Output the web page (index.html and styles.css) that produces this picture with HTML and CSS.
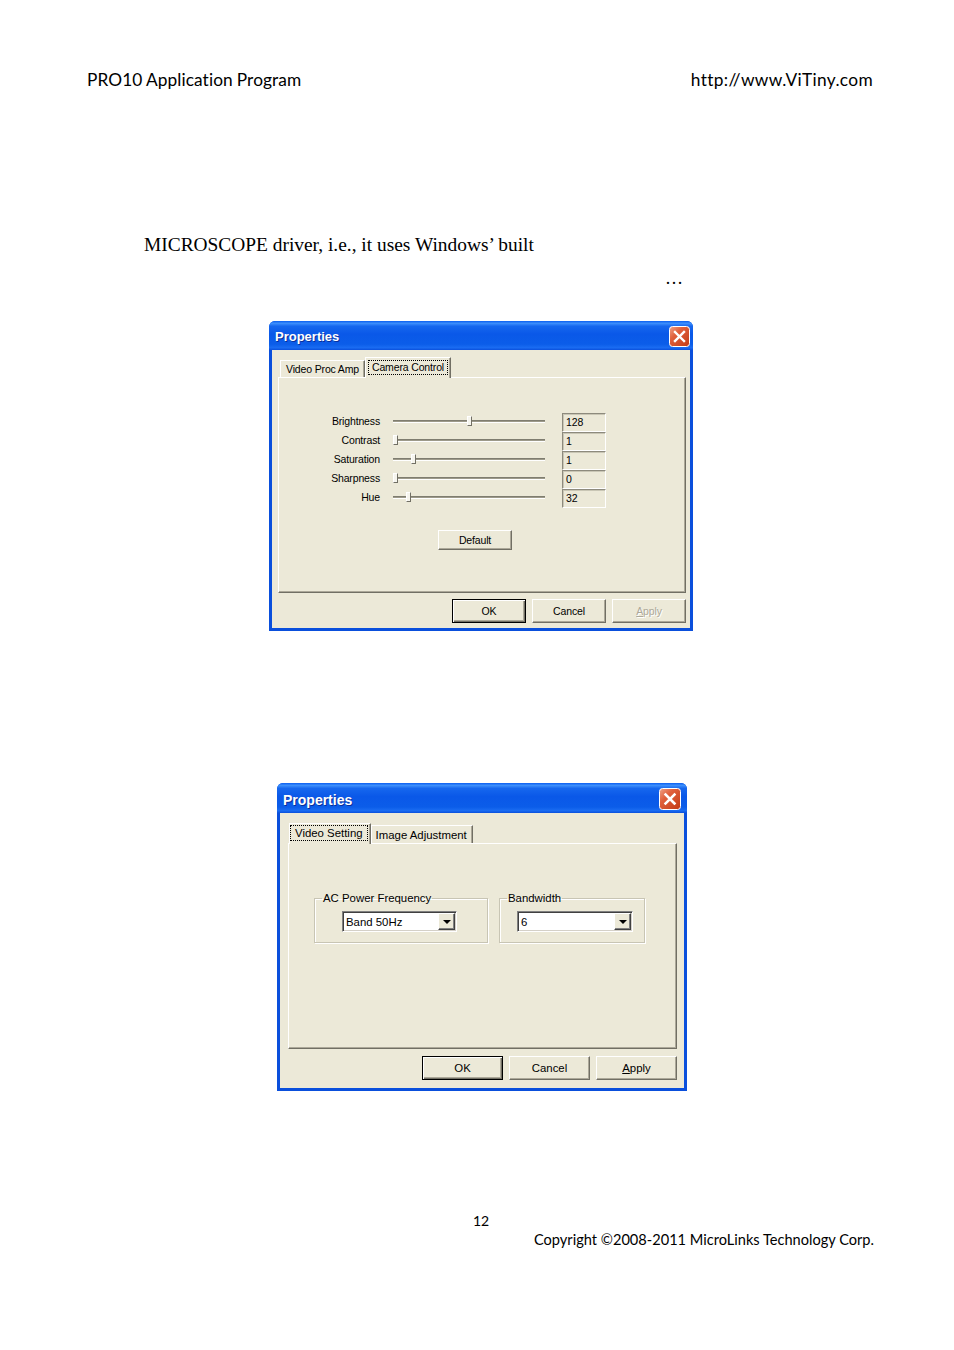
FILE: index.html
```html
<!DOCTYPE html>
<html>
<head>
<meta charset="utf-8">
<link rel="stylesheet" href="styles.css">
</head>
<body>
<div class="page">
  <header class="hdr">
    <span>PRO10 Application Program</span>
    <span>http://www.ViTiny.com</span>
  </header>

  <p class="body-text">MICROSCOPE driver, i.e., it uses Windows’ built</p>
  <p class="ellipsis">…</p>

  <div class="win win1">
    <div class="titlebar">
      <span class="title">Properties</span>
      <span class="close">
        <svg width="21" height="21" viewBox="0 0 21 21">
          <defs>
            <linearGradient id="cg1" x1="0" y1="0" x2="1" y2="1">
              <stop offset="0" stop-color="#f0a48a"/>
              <stop offset="0.35" stop-color="#e0603c"/>
              <stop offset="1" stop-color="#c23a14"/>
            </linearGradient>
          </defs>
          <rect x="0.5" y="0.5" width="20" height="20" rx="3" fill="url(#cg1)" stroke="#fff"/>
          <path d="M6 6 L15 15 M15 6 L6 15" stroke="#fff" stroke-width="2.4" stroke-linecap="square"/>
        </svg>
      </span>
    </div>
    <div class="client">
      <div class="tabs">
        <span class="tab">Video Proc Amp</span>
        <span class="tab sel"><span class="focus">Camera Control</span></span>
      </div>
      <div class="panel">
        <div class="sliders">
          <span class="lbl">Brightness</span>
          <span class="track"><span class="thumb" style="left:74px"></span></span>
          <span class="val">128</span>

          <span class="lbl">Contrast</span>
          <span class="track"><span class="thumb" style="left:0px"></span></span>
          <span class="val">1</span>

          <span class="lbl">Saturation</span>
          <span class="track"><span class="thumb" style="left:18px"></span></span>
          <span class="val">1</span>

          <span class="lbl">Sharpness</span>
          <span class="track"><span class="thumb" style="left:0px"></span></span>
          <span class="val">0</span>

          <span class="lbl">Hue</span>
          <span class="track"><span class="thumb" style="left:13px"></span></span>
          <span class="val">32</span>
        </div>
        <span class="btn btn-default">Default</span>
      </div>
      <div class="btnrow">
        <span class="btn btn-main ok">OK</span>
        <span class="btn btn-main">Cancel</span>
        <span class="btn btn-main disabled"><u>A</u>pply</span>
      </div>
    </div>
  </div>

  <div class="win win2">
    <div class="titlebar">
      <span class="title">Properties</span>
      <span class="close">
        <svg width="22" height="22" viewBox="0 0 22 22">
          <defs>
            <linearGradient id="cg2" x1="0" y1="0" x2="1" y2="1">
              <stop offset="0" stop-color="#f0a48a"/>
              <stop offset="0.35" stop-color="#e0603c"/>
              <stop offset="1" stop-color="#c23a14"/>
            </linearGradient>
          </defs>
          <rect x="0.5" y="0.5" width="21" height="21" rx="3" fill="url(#cg2)" stroke="#fff"/>
          <path d="M6.5 6.5 L15.5 15.5 M15.5 6.5 L6.5 15.5" stroke="#fff" stroke-width="2.5" stroke-linecap="square"/>
        </svg>
      </span>
    </div>
    <div class="client">
      <div class="tabs">
        <span class="tab sel"><span class="focus">Video Setting</span></span>
        <span class="tab">Image Adjustment</span>
      </div>
      <div class="panel">
        <div class="groups">
          <fieldset class="group g-ac">
            <legend>AC Power Frequency</legend>
            <div class="combo"><span class="ctext">Band 50Hz</span><span class="cbtn"></span></div>
          </fieldset>
          <fieldset class="group g-bw">
            <legend>Bandwidth</legend>
            <div class="combo"><span class="ctext">6</span><span class="cbtn"></span></div>
          </fieldset>
        </div>
      </div>
      <div class="btnrow">
        <span class="btn btn-main ok">OK</span>
        <span class="btn btn-main">Cancel</span>
        <span class="btn btn-main"><u>A</u>pply</span>
      </div>
    </div>
  </div>

  <p class="pageno">12</p>
  <p class="copy">Copyright ©2008-2011 MicroLinks Technology Corp.</p>
</div>
</body>
</html>
```

FILE: styles.css
```css
* { box-sizing: border-box; }
html, body { margin: 0; padding: 0; background: #fff; }
.page {
  width: 954px;
  height: 1350px;
  background: #fff;
  overflow: hidden;
}
p { margin: 0; }

.hdr {
  display: flex;
  justify-content: space-between;
  padding: 69px 81px 0 87px;
  font-family: Lato, "Liberation Sans", sans-serif;
  font-size: 17.3px;
  letter-spacing: 0.1px;
  word-spacing: -0.5px;
  line-height: 22px;
  color: #000;
}
.hdr span:last-child { letter-spacing: 0.35px; }

.body-text {
  margin-top: 143px;
  padding-left: 144px;
  font-family: "Liberation Serif", serif;
  font-size: 19.4px;
  line-height: 22px;
  color: #000;
}
.ellipsis {
  margin-top: 11px;
  padding-left: 665px;
  font-family: "Liberation Serif", serif;
  font-size: 18px;
  line-height: 22px;
  color: #000;
}

/* ---------- XP window ---------- */
.win {
  display: flex;
  flex-direction: column;
  background: #0a4fdc;
  border-radius: 6px 6px 0 0;
  font-family: "Liberation Sans", Arial, sans-serif;
  color: #000;
}
.titlebar {
  display: flex;
  align-items: center;
  justify-content: space-between;
  background: linear-gradient(to bottom,
    #0a5ef0 0%, #3d8ffc 8%, #1667ee 18%, #0a58e8 45%, #0b5de9 80%, #1a6cf2 92%, #0a50dc 100%);
  border-radius: 6px 6px 0 0;
  color: #fff;
  font-weight: bold;
}
.title { text-shadow: 1px 1px 0 #0a2f9a; }
.close { display: flex; }
.client {
  flex: 1;
  display: flex;
  flex-direction: column;
  background: #ece9d8;
}

.tabs {
  display: flex;
  align-items: flex-end;
  position: relative;
  z-index: 1;
}
.tab {
  display: flex;
  align-items: center;
  background: #ece9d8;
  border-top: 1px solid #fff;
  border-left: 1px solid #fff;
  border-right: 1px solid #716f64;
  box-shadow: inset -1px 0 #aca899;
  white-space: nowrap;
}
.tab.sel { border-bottom: none; }
.focus { border: 1px dotted #000; }

.panel {
  background: #ece9d8;
  border: 1px solid;
  border-color: #fff #716f64 #716f64 #fff;
  box-shadow: inset -1px -1px #aca899;
  display: flex;
  flex-direction: column;
  align-items: flex-start;
}

.btn {
  display: flex;
  align-items: center;
  justify-content: center;
  background: #ece9d8;
  border: 1px solid;
  border-color: #fff #716f64 #716f64 #fff;
  box-shadow: inset -1px -1px #aca899;
  white-space: nowrap;
}
.btn.ok {
  border: 1px solid #000;
  box-shadow: inset 1px 1px #fff, inset -1px -1px #716f64, inset -2px -2px #aca899;
}
.btn.disabled { color: #aca899; text-shadow: 1px 1px 0 #fff; }
.btnrow { display: flex; justify-content: flex-end; }

/* ---------- dialog 1 ---------- */
.win1 {
  margin: 32px 0 0 269px;
  width: 424px;
  height: 310px;
  padding: 0 3px 3px;
  font-size: 10.5px;
  letter-spacing: -0.15px;
}
.win1 .titlebar {
  height: 29px;
  margin: 0 -3px;
  padding: 2px 3px 0 6px;
  font-size: 13px;
  letter-spacing: 0;
}
.win1 .close { margin-top: -1px; }
.win1 .client { padding: 7px 4px 5px 6px; }
.win1 .tabs { height: 21px; margin: 0 0 -1px 2px; }
.win1 .tab { height: 17px; margin-bottom: 1px; padding: 0 5px; }
.win1 .tab.sel { height: 21px; margin-bottom: 0; padding: 0 2px 2px 2px; align-items: center; }
.win1 .tab.sel .focus { padding: 0 3px; line-height: 13px; }
.win1 .panel { width: 408px; height: 216px; }

.sliders {
  display: grid;
  grid-template-columns: 102px 169px 44px;
  grid-auto-rows: 19px;
  align-items: center;
  margin: 35px 0 0 12px;
}
.lbl { text-align: right; padding-right: 13px; margin-top: -3px; }
.track {
  position: relative;
  width: 152px;
  height: 3px;
  margin-top: -3px;
  background: #9d9a8a;
  border-top: 1px solid #7f7d70;
  border-bottom: 1px solid #fff;
}
.thumb {
  position: absolute;
  top: -5px;
  width: 5px;
  height: 10px;
  background: #f6f5ee;
  border: 1px solid;
  border-color: #fff #716f64 #716f64 #fff;
}
.val {
  height: 19px;
  border: 1px solid;
  border-color: #8d8a7d #fff #fff #8d8a7d;
  box-shadow: inset 1px 1px #c9c6b5;
  padding: 1px 0 0 3px;
  line-height: 15px;
}
.btn-default { width: 74px; height: 20px; margin: 22px 0 0 159px; }
.win1 .btnrow { gap: 6px; margin-top: 6px; }
.win1 .btn-main { width: 74px; height: 24px; }

/* ---------- dialog 2 ---------- */
.win2 {
  margin: 152px 0 0 277px;
  width: 410px;
  height: 308px;
  padding: 0 3px 3px;
  font-size: 11.4px;
}
.win2 .titlebar {
  height: 30px;
  margin: 0 -3px;
  padding: 3px 6px 0 6px;
  font-size: 14px;
}
.win2 .close { margin-top: -1px; }
.win2 .client { padding: 10px 7px 8px 8px; }
.win2 .tabs { height: 21px; margin: 0 0 -1px 1px; }
.win2 .tab { height: 18px; margin-bottom: 1px; padding: 0 5px 0 4px; }
.win2 .tab.sel { height: 21px; margin-bottom: 0; padding: 0 2px 2px 0; }
.win2 .tab.sel .focus { padding: 0 4px; line-height: 14px; }
.win2 .panel { width: 389px; height: 206px; }

.groups { display: flex; gap: 11px; margin: 47px 0 0 25px; }
.group {
  margin: 0;
  padding: 6px 0 9px;
  border: 1px solid #c8c5b4;
  box-shadow: 1px 1px 0 #fff, inset 1px 1px 0 #fff;
  height: 52px;
}
.group legend {
  padding: 0 1px;
  margin-left: 7px;
  line-height: 14px;
  color: #000;
}
.g-ac { width: 174px; }
.g-bw { width: 146px; margin-left: 0; }
.g-ac .combo { margin-left: 27px; }
.g-bw .combo { margin-left: 17px; }
.combo {
  display: flex;
  align-items: center;
  justify-content: space-between;
  height: 21px;
  background: #fff;
  border: 1px solid;
  border-color: #808080 #fff #fff #808080;
  box-shadow: inset 1px 1px #404040, inset -1px -1px #d4d0c8;
  padding: 0 1px 0 3px;
}
.g-ac .combo { width: 115px; }
.g-bw .combo { width: 116px; }
.cbtn {
  width: 17px;
  height: 17px;
  background: #ece9d8;
  border: 1px solid;
  border-color: #fff #404040 #404040 #fff;
  box-shadow: inset -1px -1px #808080;
  display: flex;
  align-items: center;
  justify-content: center;
}
.cbtn::after {
  content: "";
  border-left: 4px solid transparent;
  border-right: 4px solid transparent;
  border-top: 4px solid #000;
}
.win2 .btnrow { gap: 6px; margin-top: 7px; }
.win2 .btn-main { width: 81px; height: 24px; }

/* ---------- footer ---------- */
.pageno {
  margin-top: 121px;
  padding-left: 473px;
  font-family: Lato, "Liberation Sans", sans-serif;
  font-size: 14px;
  line-height: 18px;
}
.copy {
  margin-top: 1px;
  text-align: right;
  padding-right: 80px;
  font-family: Lato, "Liberation Sans", sans-serif;
  font-size: 14.6px;
  line-height: 18px;
}
```
